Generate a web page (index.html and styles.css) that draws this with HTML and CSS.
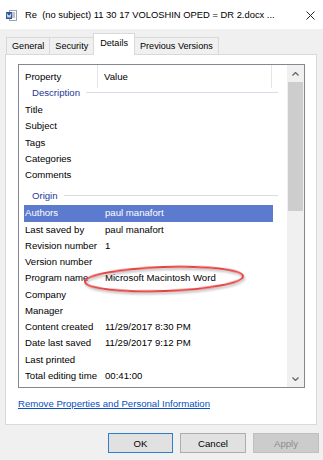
FILE: index.html
```html
<!DOCTYPE html>
<html lang="en">
<head>
    <meta charset="UTF-8">
    <meta name="viewport" content="width=device-width, initial-scale=1.0">
    <title>Properties</title>
    <link rel="stylesheet" href="styles.css">
</head>
<body>
    <div class="window">
        <!-- Заголовок окна -->
        <div class="titlebar">
            <svg class="app-icon" width="11" height="11" viewBox="0 0 11 11">
                <rect x="3.5" y="0.5" width="7" height="10" fill="#fff" stroke="#9aa3b0"/>
                <line x1="6" y1="3" x2="9" y2="3" stroke="#7a8aa8"/>
                <line x1="6" y1="5" x2="9" y2="5" stroke="#7a8aa8"/>
                <line x1="6" y1="7" x2="9" y2="7" stroke="#7a8aa8"/>
                <rect x="0" y="2" width="6" height="7" fill="#2b5797"/>
                <path d="M1 3.5 L2 7.5 L3 5 L4 7.5 L5 3.5" fill="none" stroke="#fff" stroke-width="0.8"/>
            </svg>
            <span class="title">Re&nbsp; (no subject) 11 30 17 VOLOSHIN OPED = DR 2.docx ...</span>
            <svg class="close" width="9" height="9" viewBox="0 0 9 9">
                <path d="M0.5 0.5 L8.5 8.5 M8.5 0.5 L0.5 8.5" stroke="#222" stroke-width="1"/>
            </svg>
        </div>

        <div class="tabs">
            <div class="tab">General</div>
            <div class="tab">Security</div>
            <div class="tab active">Details</div>
            <div class="tab">Previous Versions</div>
        </div>

        <div class="panel">
            <div class="listbox">
                <div class="list">
                    <div class="list-head">
                        <span class="col-name">Property</span>
                        <span class="col-value">Value</span>
                        <span class="col-rest"></span>
                    </div>

                    <div class="group first"><span>Description</span></div>
                    <div class="row"><span class="name">Title</span><span class="value"></span></div>
                    <div class="row"><span class="name">Subject</span><span class="value"></span></div>
                    <div class="row"><span class="name">Tags</span><span class="value"></span></div>
                    <div class="row"><span class="name">Categories</span><span class="value"></span></div>
                    <div class="row"><span class="name">Comments</span><span class="value"></span></div>

                    <div class="group"><span>Origin</span></div>
                    <div class="row selected"><span class="name">Authors</span><span class="value">paul manafort</span></div>
                    <div class="row"><span class="name">Last saved by</span><span class="value">paul manafort</span></div>
                    <div class="row"><span class="name">Revision number</span><span class="value">1</span></div>
                    <div class="row"><span class="name">Version number</span><span class="value"></span></div>
                    <div class="row"><span class="name">Program name</span><span class="value">Microsoft Macintosh Word</span></div>
                    <div class="row"><span class="name">Company</span><span class="value"></span></div>
                    <div class="row"><span class="name">Manager</span><span class="value"></span></div>
                    <div class="row"><span class="name">Content created</span><span class="value">11/29/2017 8:30 PM</span></div>
                    <div class="row"><span class="name">Date last saved</span><span class="value">11/29/2017 9:12 PM</span></div>
                    <div class="row"><span class="name">Last printed</span><span class="value"></span></div>
                    <div class="row"><span class="name">Total editing time</span><span class="value">00:41:00</span></div>
                </div>

                <div class="scrollbar">
                    <div class="arrow">
                        <svg width="7" height="4" viewBox="0 0 7 4"><path d="M0.5 3.5 L3.5 0.5 L6.5 3.5" fill="none" stroke="#606060" stroke-width="1.2"/></svg>
                    </div>
                    <div class="track"><div class="thumb"></div></div>
                    <div class="arrow">
                        <svg width="7" height="4" viewBox="0 0 7 4"><path d="M0.5 0.5 L3.5 3.5 L6.5 0.5" fill="none" stroke="#606060" stroke-width="1.2"/></svg>
                    </div>
                </div>
            </div>

            <a class="remove-link" href="#">Remove Properties and Personal Information</a>
        </div>

        <div class="buttons">
            <button class="btn default">OK</button>
            <button class="btn">Cancel</button>
            <button class="btn" disabled>Apply</button>
        </div>

        <!-- Красная обводка поверх списка -->
        <svg class="mark" width="180" height="40" viewBox="0 0 180 40">
            <defs>
                <filter id="shade" x="-10%" y="-30%" width="120%" height="170%">
                    <feDropShadow dx="1" dy="2" stdDeviation="1.2" flood-color="#888" flood-opacity="0.6"/>
                </filter>
            </defs>
            <ellipse cx="86" cy="19" rx="79" ry="12" transform="rotate(-2 86 19)" fill="none" stroke="#e5403f" stroke-width="2" filter="url(#shade)"/>
        </svg>
    </div>
</body>
</html>
```

FILE: styles.css
```css
body {
    margin: 0;
    padding: 0;
    font-family: "Liberation Sans", Arial, sans-serif;
    font-size: 9.6px;
    color: #000;
    background-color: #f0f0f0;
}

.window {
    position: relative;
    width: 323px;
    height: 460px;
    background-color: #f0f0f0;
    overflow: hidden;
}

.titlebar {
    height: 29px;
    background-color: #ffffff;
    display: flex;
    align-items: center;
    padding-left: 6px;
    box-sizing: border-box;
}

.app-icon {
    flex-shrink: 0;
    margin-right: 8px;
    margin-top: 1px;
}

.title {
    font-size: 9.4px;
    color: #000;
    white-space: pre;
    overflow: hidden;
    min-width: 0;
    flex: 1;
}

.close {
    flex-shrink: 0;
    margin: 1px 8px 0 10px;
}

.tabs {
    display: flex;
    align-items: flex-end;
    height: 21px;
    margin-top: 4px;
    padding-left: 6px;
    position: relative;
    z-index: 1;
}

.tab {
    height: 17px;
    line-height: 16px;
    padding: 0 5px;
    border: 1px solid #d9d9d9;
    border-bottom: none;
    margin-left: -1px;
    background-color: #f0f0f0;
    box-sizing: border-box;
    font-size: 9.1px;
}

.tab:first-child {
    margin-left: 0;
}

.tab.active {
    height: 22px;
    line-height: 18px;
    margin-bottom: -1px;
    background-color: #ffffff;
    padding: 0 6px;
}

.panel {
    margin-left: 5px;
    width: 312px;
    height: 371px;
    background-color: #ffffff;
    border: 1px solid #d9d9d9;
    box-sizing: border-box;
    padding: 9px 11px 0 12px;
}

.listbox {
    display: flex;
    width: 287px;
    height: 324px;
    border: 1px solid #828790;
    box-sizing: border-box;
    overflow: hidden;
}

.list {
    width: 268px;
    overflow: hidden;
}

.list-head {
    display: flex;
    height: 19px;
    line-height: 24px;
}

.list-head span {
    box-sizing: border-box;
    border-right: 1px solid #e5e5e5;
    height: 23px;
}

.col-name {
    width: 79px;
    padding-left: 6px;
}

.col-value {
    width: 174px;
    padding-left: 6px;
}

.col-rest {
    flex: 1;
    border-right: none !important;
}

.group {
    display: flex;
    align-items: center;
    gap: 6px;
    width: 254px;
    height: 17px;
    margin-left: 5px;
    padding-left: 8px;
    padding-bottom: 1px;
    box-sizing: border-box;
    color: #1e3796;
}

.group::after {
    content: "";
    flex: 1;
    height: 1px;
    background-color: #d6dcea;
}

.group.first {
    height: 18px;
    padding-bottom: 2px;
}

.group:not(.first) {
    height: 22px;
    padding-top: 4px;
}

.row {
    display: flex;
    width: 249px;
    height: 16.25px;
    line-height: 16px;
    margin-left: 5px;
    white-space: nowrap;
}

.row .name {
    width: 81px;
    padding-left: 1px;
    box-sizing: border-box;
}

.row.selected {
    background-color: #5c7ace;
    color: #ffffff;
}

.scrollbar {
    width: 17px;
    display: flex;
    flex-direction: column;
    background-color: #f0f0f0;
}

.arrow {
    height: 17px;
    display: flex;
    align-items: center;
    justify-content: center;
}

.track {
    flex: 1;
    padding: 0 1px;
}

.thumb {
    height: 129px;
    background-color: #cdcdcd;
}

.remove-link {
    display: block;
    margin-top: 9px;
    line-height: 14px;
    color: #0a4fc0;
    text-decoration: underline;
}

.buttons {
    display: flex;
    justify-content: flex-end;
    gap: 7px;
    padding-right: 4px;
    margin-top: 8px;
}

.btn {
    width: 66px;
    height: 20px;
    font-family: inherit;
    font-size: 9.6px;
    color: #000;
    background-color: #e1e1e1;
    border: 1px solid #adadad;
    padding: 0;
}

.btn.default {
    border-color: #2f7fc8;
    width: 65px;
}

.btn:disabled {
    background-color: #cccccc;
    border-color: #bfbfbf;
    color: #8c8c8c;
}

.mark {
    position: absolute;
    left: 78px;
    top: 260px;
}
```
